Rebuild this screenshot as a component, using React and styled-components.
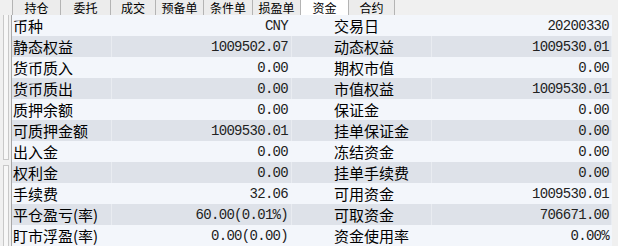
import React from "react";
import styled, { createGlobalStyle } from "styled-components";

const Global = createGlobalStyle`
  html, body { margin: 0; padding: 0; background: #f0f0f0; overflow: hidden; }
  body { width: 618px; height: 246px; }
`;

const Page = styled.div`
  width: 618px;
  height: 246px;
  display: flex;
  flex-direction: column;
  background: #f0f0f0;
  overflow: hidden;
`;

const TabBar = styled.div`
  display: flex;
  height: 15px;
  padding-left: 12px;
  background: #f0f0f0;
`;

const Tab = styled.div`
  width: ${(p) => p.$w}px;
  height: 15px;
  box-sizing: border-box;
  border-left: 1px solid #b4b4b4;
  ${(p) => (p.$last ? "border-right: 1px solid #b4b4b4;" : "")}
  background: ${(p) => (p.$active ? "#ffffff" : "#ececec")};
  font-family: "Noto Sans CJK SC", sans-serif;
  font-size: 12px;
  line-height: 15px;
  color: #000;
  text-align: center;
`;

const Body = styled.div`
  flex: 1;
  display: flex;
`;

const LeftStrip = styled.div`
  width: 12px;
  border-right: 1px solid #a8a8a8;
  background: #f0f0f0;
  display: flex;
  flex-direction: column;
  padding: 0 2px 0 3px;
  box-sizing: border-box;
  gap: 5px;
`;

const StripBox = styled.div`
  flex: ${(p) => p.$flex};
  border-left: 1px solid #c8c8c8;
  border-right: 1px solid #c8c8c8;
  border-bottom: ${(p) => (p.$bottom ? "1px solid #c8c8c8" : "none")};
  border-top: ${(p) => (p.$top ? "1px solid #c8c8c8" : "none")};
  background: #f7f7f7;
`;

const Table = styled.div`
  width: 600px;
  display: flex;
  flex-direction: column;
`;

const Row = styled.div`
  display: grid;
  grid-template-columns: 100px 180px 140px 180px;
  height: 21px;
  background: ${(p) => (p.$alt ? "#dee2e9" : "#f3f6fb")};
`;

const Cell = styled.div`
  box-sizing: border-box;
  height: 21px;
  border-right: 1px solid ${(p) => (p.$alt ? "#e9ecf1" : "#f3f6fb")};
  overflow: hidden;
  white-space: nowrap;
`;

const Label = styled(Cell)`
  font-family: "Noto Sans CJK SC", sans-serif;
  font-size: 15px;
  line-height: 21px;
  color: #000;
  padding-left: ${(p) => p.$pad}px;
`;

const Value = styled(Cell)`
  font-family: "Liberation Mono", monospace;
  font-size: 14px;
  letter-spacing: -0.7px;
  line-height: 22px;
  color: #222;
  text-align: right;
  padding-right: ${(p) => p.$pad}px;
`;

const RightEdge = styled.div`
  flex: 1;
  background: #f0f0f0;
`;

const tabs = [
  ["持仓", 48],
  ["委托", 50],
  ["成交", 45],
  ["预备单", 48],
  ["条件单", 49],
  ["损盈单", 48],
  ["资金", 48],
  ["合约", 47],
];

const rows = [
  ["币种", "CNY", "交易日", "20200330"],
  ["静态权益", "1009502.07", "动态权益", "1009530.01"],
  ["货币质入", "0.00", "期权市值", "0.00"],
  ["货币质出", "0.00", "市值权益", "1009530.01"],
  ["质押余额", "0.00", "保证金", "0.00"],
  ["可质押金额", "1009530.01", "挂单保证金", "0.00"],
  ["出入金", "0.00", "冻结资金", "0.00"],
  ["权利金", "0.00", "挂单手续费", "0.00"],
  ["手续费", "32.06", "可用资金", "1009530.01"],
  ["平仓盈亏(率)", "60.00(0.01%)", "可取资金", "706671.00"],
  ["盯市浮盈(率)", "0.00(0.00)", "资金使用率", "0.00%"],
];

export default function App() {
  return (
    <Page>
      <Global />
      <TabBar>
        {tabs.map(([t, w], i) => (
          <Tab key={t} $w={w} $active={t === "资金"} $last={i === tabs.length - 1}>
            {t}
          </Tab>
        ))}
      </TabBar>
      <Body>
        <LeftStrip>
          <StripBox $flex={145} $bottom />
          <StripBox $flex={80} $top />
        </LeftStrip>
        <Table>
          {rows.map((r, i) => {
            const alt = i % 2 === 1;
            return (
              <Row key={r[0]} $alt={alt}>
                <Label $alt={alt} $pad={1}>{r[0]}</Label>
                <Value $alt={alt} $pad={3}>{r[1]}</Value>
                <Label $alt={alt} $pad={42}>{r[2]}</Label>
                <Value $alt={alt} $pad={2}>{r[3]}</Value>
              </Row>
            );
          })}
        </Table>
        <RightEdge />
      </Body>
    </Page>
  );
}
